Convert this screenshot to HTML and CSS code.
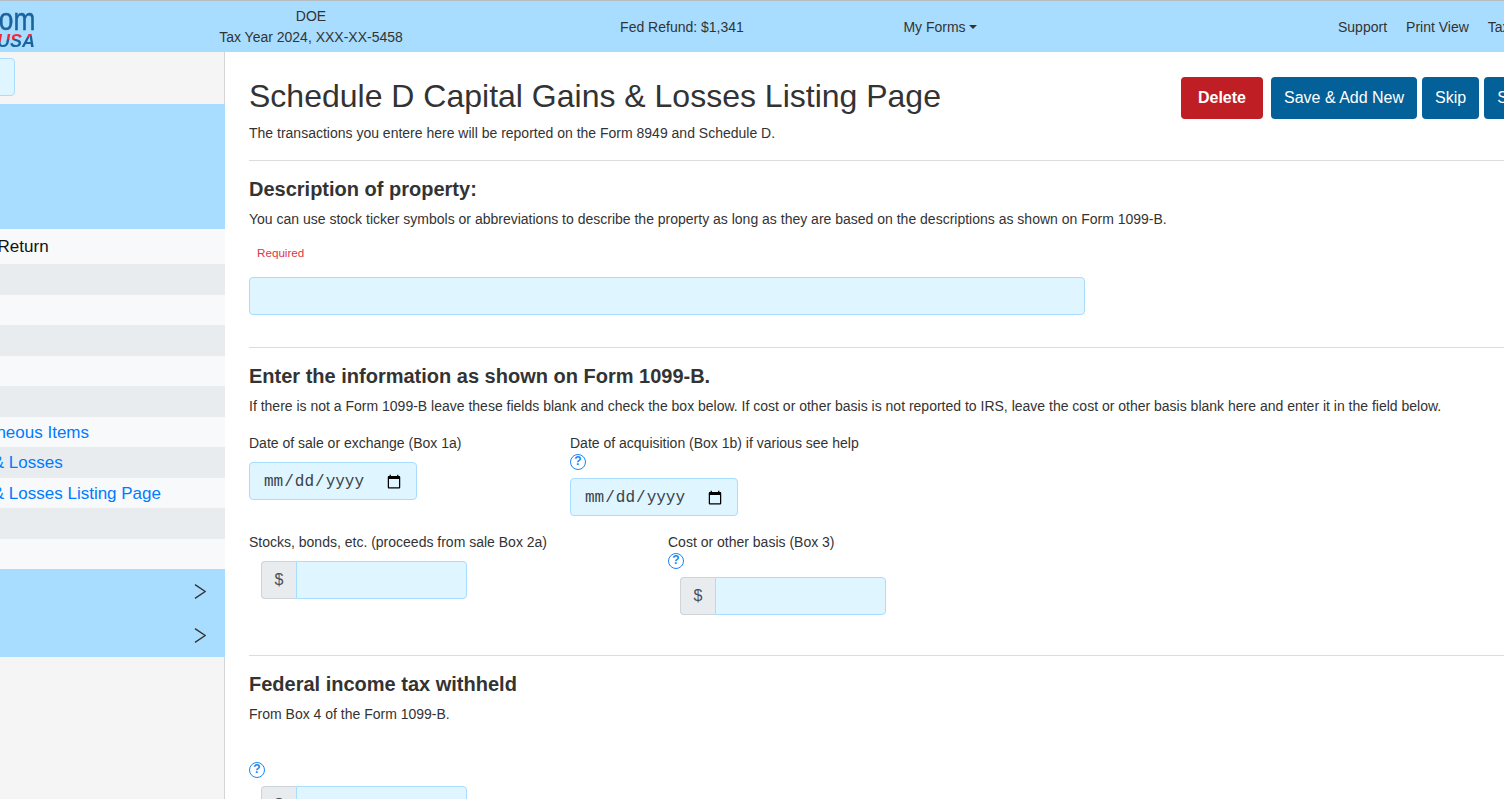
FILE: index.html
```html
<!DOCTYPE html>
<html lang="en">
<head>
<meta charset="utf-8">
<title>Schedule D Capital Gains &amp; Losses Listing Page</title>
<link rel="stylesheet" href="styles.css">
</head>
<body>
<div class="page">
  <header class="topbar">
    <div class="logo">
      <span class="logo-top">TaxesFrom</span>
      <span class="logo-usa">USA</span>
    </div>
    <div class="who"><div>DOE</div><div>Tax Year 2024, XXX-XX-5458</div></div>
    <div class="refund">Fed Refund: $1,341</div>
    <div class="forms">My Forms<span class="caret"></span></div>
    <nav class="links"><a>Support</a><a>Print View</a><a>Tax Pro</a></nav>
  </header>
  <div class="layout">
    <aside class="sidebar">
      <div class="side-search"><input class="field side-field" type="text"></div>
      <div class="side-head"></div>
      <div class="row plain ret">Amend Return</div>
      <div class="row grey"></div>
      <div class="row plain short"></div>
      <div class="row grey"></div>
      <div class="row plain short"></div>
      <div class="row grey"></div>
      <div class="row plain misc"><a>Miscellaneous Items</a></div>
      <div class="row grey cap"><a>Capital Gains &amp; Losses</a></div>
      <div class="row plain cap"><a>Capital Gains &amp; Losses Listing Page</a></div>
      <div class="row grey"></div>
      <div class="row plain short"></div>
      <div class="side-sect"><svg class="chev" viewBox="0 0 12 15"><path d="M1 .7 11.2 7.5 1 14.3"/></svg></div>
      <div class="side-sect"><svg class="chev" viewBox="0 0 12 15"><path d="M1 .7 11.2 7.5 1 14.3"/></svg></div>
    </aside>
    <main class="main">
      <div class="title-row">
        <div>
          <h1>Schedule D Capital Gains &amp; Losses Listing Page</h1>
          <p class="sub">The transactions you entere here will be reported on the Form 8949 and Schedule D.</p>
        </div>
        <div class="actions">
          <button class="btn red">Delete</button>
          <button class="btn blue gap-l">Save &amp; Add New</button>
          <button class="btn blue">Skip</button>
          <button class="btn blue">Save</button>
        </div>
      </div>
      <hr class="rule first">
      <h2>Description of property:</h2>
      <p class="note">You can use stock ticker symbols or abbreviations to describe the property as long as they are based on the descriptions as shown on Form 1099-B.</p>
      <div class="req">Required</div>
      <input class="field desc" type="text">
      <hr class="rule">
      <h2>Enter the information as shown on Form 1099-B.</h2>
      <p class="note">If there is not a Form 1099-B leave these fields blank and check the box below. If cost or other basis is not reported to IRS, leave the cost or other basis blank here and enter it in the field below.</p>
      <div class="fields dates">
        <div class="col c1">
          <label>Date of sale or exchange (Box 1a)</label>
          <input class="field date with-gap" type="date">
        </div>
        <div class="col">
          <label>Date of acquisition (Box 1b) if various see help</label>
          <span class="help">?</span>
          <input class="field date" type="date">
        </div>
      </div>
      <div class="fields amounts">
        <div class="col c2">
          <label>Stocks, bonds, etc. (proceeds from sale Box 2a)</label>
          <div class="group with-gap"><span class="addon">$</span><input class="field money" type="text"></div>
        </div>
        <div class="col">
          <label>Cost or other basis (Box 3)</label>
          <span class="help">?</span>
          <div class="group"><span class="addon">$</span><input class="field money" type="text"></div>
        </div>
      </div>
      <hr class="rule">
      <h2>Federal income tax withheld</h2>
      <p class="note">From Box 4 of the Form 1099-B.</p>
      <span class="help low">?</span>
      <div class="group"><span class="addon">$</span><input class="field money" type="text"></div>
    </main>
  </div>
</div>
</body>
</html>
```
FILE: styles.css
```css
html, body { margin: 0; padding: 0; height: 799px; overflow: hidden; background: #fff; }
body { font-family: "Liberation Sans", Arial, sans-serif; font-size: 14px; line-height: 21px; color: #333; }
* { box-sizing: border-box; }

/* the page is horizontally scrolled in the reference */
.page { width: 1800px; margin-left: -120px; }

.topbar { height: 52px; padding-top: 2px; background: #a8ddff; border-top: 1px solid #b5bcc2; display: flex; align-items: center; }
.logo { width: 155px; height: 50px; overflow: hidden; display: flex; flex-direction: column; align-items: flex-end; color: #1a639c; }
.logo-top { font-size: 32px; line-height: 28px; margin-top: 2px; transform: scaleX(.82); transform-origin: right center; -webkit-text-stroke: .5px #1a639c; white-space: nowrap; }
.logo-usa { font-size: 18px; line-height: 17px; padding-right: 1px; margin-right: -1px; font-weight: 700; font-style: italic; background: linear-gradient(172deg, #ed2a3a 0 36%, #1a639c 36%); -webkit-background-clip: text; background-clip: text; color: transparent; }
.who { width: 422px; margin-left: 65px; margin-top: -2px; text-align: center; }
.refund { width: 320px; text-align: center; }
.forms { width: 196px; text-align: center; }
.caret { display: inline-block; margin-left: 3px; vertical-align: 3px; border-top: 4px solid #333; border-left: 4px solid transparent; border-right: 4px solid transparent; }
.links { margin-left: 300px; display: flex; gap: 19px; white-space: nowrap; }

.layout { display: flex; height: 747px; }
.sidebar { width: 345px; flex: none; background: #f5f5f5; border-right: 1px solid #d5d5d5; font-size: 17px; line-height: 24px; color: #212529; }
.side-search { height: 52px; padding: 6px 209px 0 0; }
.side-field { width: 100%; display: block; }
.side-head { height: 125px; background: #a8ddff; margin-right: -1px; }
.row { height: 31px; margin-right: -1px; display: flex; align-items: center; white-space: nowrap; }
.row a { color: #007bff; }
.plain { background: #f8f9fa; height: 30px; }
.grey { background: #e9ecef; }
.ret { height: 35px; padding-left: 59px; color: #111; }
.misc { padding-left: 55px; padding-top: 1px; }
.cap { padding-left: 6px; }
.cap.plain { padding-top: 1px; }
.side-sect { height: 44px; margin-right: -1px; background: #a8ddff; display: flex; align-items: center; justify-content: flex-end; padding-right: 19px; }
.chev { width: 12px; height: 15px; fill: none; stroke: #333; stroke-width: 1.4; }

.main { flex: none; width: 1400px; padding: 25px 24px 0; }
.title-row { display: flex; align-items: flex-start; width: 1330px; }
h1 { margin: 0; font-size: 32px; line-height: 38px; font-weight: 400; color: #333; white-space: nowrap; }
.sub { margin: 8px 0 0; }
.actions { display: flex; gap: 5px; margin-left: 240px; white-space: nowrap; }
.btn { height: 42px; padding: 0 13px; border: 0; border-radius: 4px; font-family: inherit; font-size: 16px; color: #fff; }
.red { background: #be1e24; font-weight: 700; padding: 0 17px; }
.blue { background: #036098; }
.gap-l { margin-left: 3px; }

.rule { width: 1330px; margin: 32px 0 16px; border: 0; border-top: 1px solid #dcdcdc; height: 1px; }
.rule.first { margin-top: 16px; }
h2 { margin: 0; font-size: 20px; line-height: 24px; font-weight: 700; color: #333; }
.note { margin: 8px 0 0; white-space: nowrap; }
.req { margin: 14px 0 16px 8px; font-size: 11.67px; line-height: 17px; color: #dc3545; }

.field { height: 38px; padding: 6px 12px; background: #dff5ff; border: 1px solid #a8ddff; border-radius: 4px; font-size: 16px; color: #495057; outline: 0; }
.desc { width: 836px; display: block; }
.date { width: 168px; display: block; padding: 7px 12px 5px 13px; font-family: "Liberation Mono", monospace; color: #3b4248; }
.with-gap { margin-top: 8px; }

.fields { display: flex; }
.dates { margin-top: 16px; padding-bottom: 16px; }
.amounts { padding-bottom: 8px; }
.c1 { width: 321px; flex: none; }
.c2 { width: 419px; flex: none; }
.col label { display: block; }
.help { width: 16px; height: 16px; margin-bottom: 8px; border: 1.5px solid #1a85f5; border-radius: 50%; color: #1a85f5; font-size: 12px; font-weight: 700; line-height: 13px; text-align: center; display: block; }
.help.low { margin-top: 37px; }
.group { display: flex; width: 206px; margin-left: 12px; }
.addon { width: 35px; height: 38px; flex: none; background: #e9ecef; border: 1px solid #ced4da; border-right: 0; border-radius: 4px 0 0 4px; font-size: 16px; line-height: 36px; color: #495057; text-align: center; }
.money { flex: 1; min-width: 0; border-radius: 0 4px 4px 0; }
```
